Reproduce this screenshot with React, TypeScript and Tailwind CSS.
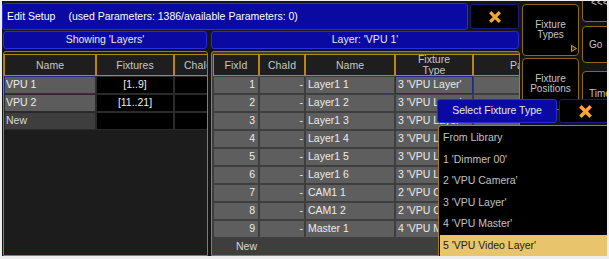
const layers = [
  { id: 1, name: "Layer1 1", type: "3 'VPU Layer'" },
  { id: 2, name: "Layer1 2", type: "3 'VPU Layer'" },
  { id: 3, name: "Layer1 3", type: "3 'VPU Layer'" },
  { id: 4, name: "Layer1 4", type: "3 'VPU Layer'" },
  { id: 5, name: "Layer1 5", type: "3 'VPU Layer'" },
  { id: 6, name: "Layer1 6", type: "3 'VPU Layer'" },
  { id: 7, name: "CAM1 1", type: "2 'VPU Camera'" },
  { id: 8, name: "CAM1 2", type: "2 'VPU Camera'" },
  { id: 9, name: "Master 1", type: "4 'VPU Master'" },
];

const types = ["From Library", "1 'Dimmer 00'", "2 'VPU Camera'", "3 'VPU Layer'", "4 'VPU Master'", "5 'VPU Video Layer'"];

function CloseX({ size }: { size: number }) {
  return (
    <svg width={size} height={size} viewBox="0 0 16 16">
      <path d="M2.5 2.5 L13.5 13.5 M13.5 2.5 L2.5 13.5" stroke="#f3a630" strokeWidth="3.8" />
    </svg>
  );
}

function Head({ w, className = "justify-center", children }: { w: string; className?: string; children: React.ReactNode }) {
  return (
    <div className={`${w} ${className} h-[22px] shrink-0 border border-[#b8880e] bg-[#1e1e1e] text-[#c8c8c8] flex items-center text-center leading-[11px] whitespace-nowrap overflow-hidden`}>
      {children}
    </div>
  );
}

export default function App() {
  return (
    <div className="w-[609px] h-[259px] bg-[#eeeeee] pt-[1px] pl-[2px] pr-[2px] pb-[3px] font-['Liberation_Sans',Arial,sans-serif] text-[10.5px]">
      <div className="relative w-full h-full bg-[#151515] overflow-hidden flex">
        {/* main area */}
        <div className="w-[518px] shrink-0 flex flex-col">
          <div className="h-[29px] pt-[2px] flex gap-[2px]">
            <div className="w-[466px] h-[27px] bg-[#0a0aa2] border border-[#2b2be0] rounded-[3px] flex items-center pl-[4px] text-white">
              <span>Edit Setup</span>
              <span className="ml-[13px]">(used Parameters: 1386/available Parameters: 0)</span>
            </div>
            <div className="w-[49px] h-[25px] mt-[1px] bg-black border border-[#1a1a80] rounded-[3px] flex items-center justify-center">
              <CloseX size={14} />
            </div>
          </div>
          <div className="h-[20px] mt-[1px] flex">
            <div className="ml-[1px] w-[204px] bg-[#0a0aa2] border border-[#2b2be0] rounded-[3px] flex items-center justify-center text-[#e8e8e8]">
              Showing 'Layers'
            </div>
            <div className="ml-[4px] w-[308px] bg-[#0a0aa2] border border-[#2b2be0] rounded-[3px] flex items-center justify-center text-[#e8e8e8]">
              Layer: 'VPU 1'
            </div>
          </div>
          <div className="flex-1 mt-[2px] flex">
            {/* left panel */}
            <div className="ml-[1px] w-[205px] border border-[#a87c10] rounded-t-[3px] bg-[#1c1c1c] pt-[2px] overflow-hidden">
              <div className="flex">
                <Head w="w-[92px]">Name</Head>
                <Head w="w-[78px]">Fixtures</Head>
                <Head w="w-[40px]" className="justify-start pl-[9px]">ChaId</Head>
              </div>
              {[
                { n: "VPU 1", f: "[1..9]", sel: true },
                { n: "VPU 2", f: "[11..21]", sel: false },
              ].map((r) => (
                <div key={r.n} className="flex h-[18px]">
                  <div className={`w-[92px] shrink-0 border ${r.sel ? "border-[#1c2a8a]" : "border-[#2a2a2a]"} bg-[#5c5c5c] text-[#ececec] flex items-center pl-[1px]`}>
                    {r.n}
                  </div>
                  <div className="w-[78px] shrink-0 border border-[#2a2a2a] bg-black text-[#ececec] flex items-center justify-center">
                    {r.f}
                  </div>
                  <div className="w-[40px] shrink-0 border border-[#2a2a2a] bg-black" />
                </div>
              ))}
              <div className="flex h-[18px]">
                <div className="w-[92px] shrink-0 border border-[#2a2a2a] bg-[#3e3e3e] text-[#d8d8d8] flex items-center pl-[1px]">New</div>
                <div className="w-[78px] shrink-0 border border-[#2a2a2a] bg-black" />
                <div className="w-[40px] shrink-0 border border-[#2a2a2a] bg-black" />
              </div>
            </div>
            {/* right panel */}
            <div className="ml-[3px] w-[309px] border border-[#a87c10] rounded-t-[3px] bg-[#3e3e3e] pt-[2px] pl-[1px] overflow-hidden">
              <div className="flex bg-[#1c1c1c]">
                <Head w="w-[46px]">FixId</Head>
                <Head w="w-[46px]">ChaId</Head>
                <Head w="w-[90px]">Name</Head>
                <Head w="w-[78px]">
                  Fixture
                  <br />
                  Type
                </Head>
                <Head w="w-[60px]" className="justify-start pl-[36px]">
                  Patch
                </Head>
              </div>
              {layers.map((l) => (
                <div key={l.id} className="flex h-[18px] text-[#ececec]">
                  <div className="w-[46px] shrink-0 border border-[#3e3e3e] bg-[#5e5e5e] flex items-center justify-end pr-[3px]">{l.id}</div>
                  <div className="w-[46px] shrink-0 border border-[#3e3e3e] bg-[#5e5e5e] flex items-center justify-end pr-[1px]">-</div>
                  <div className="w-[90px] shrink-0 border border-[#3e3e3e] bg-[#5e5e5e] flex items-center pl-[2px]">{l.name}</div>
                  <div className={`w-[78px] shrink-0 border ${l.id === 1 ? "border-[#1c2a8a]" : "border-[#3e3e3e]"} bg-[#5e5e5e] flex items-center pl-[2px] whitespace-nowrap overflow-hidden`}>
                    {l.type}
                  </div>
                  <div className="w-[60px] shrink-0 border border-[#3e3e3e] bg-[#606060]" />
                </div>
              ))}
              <div className="flex h-[17px] text-[#d8d8d8]">
                <div className="w-[46px] flex items-center justify-end pr-[2px]">New</div>
              </div>
            </div>
          </div>
        </div>

        {/* right side buttons */}
        <div className="flex-1 flex text-[#c4c4c4] text-[10px]">
          <div className="ml-[2px] w-[57px] shrink-0 flex flex-col">
            <div className="relative mt-[3px] h-[52px] bg-black border border-[#8c6a16] rounded-[4px] flex items-center justify-center text-center leading-[10px]">
              Fixture
              <br />
              Types
              <svg className="absolute right-[1px] bottom-[3px]" width="6" height="7" viewBox="0 0 6 7">
                <path d="M0.5 0.5 L5.5 3.5 L0.5 6.5 Z" fill="#3a2a00" stroke="#d8a020" strokeWidth="1" />
              </svg>
            </div>
            <div className="mt-[2px] h-[52px] bg-black border border-[#8c6a16] rounded-[4px] flex items-center justify-center text-center leading-[10px]">
              Fixture
              <br />
              Positions
            </div>
          </div>
          <div className="ml-[3px] w-[40px] shrink-0 flex flex-col">
            <div className="-mt-[6px] h-[27px] bg-black border border-[#8c6a16] rounded-[4px] pt-[2px] pl-[8px] leading-[10px]">&lt;&lt;&lt;</div>
            <div className="mt-[4px] h-[37px] bg-black border border-[#8c6a16] rounded-[4px] flex items-center pl-[6px]">Go</div>
            <div className="mt-[8px] h-[45px] bg-black border border-[#8c6a16] rounded-[4px] flex items-center pl-[6px]">Time</div>
          </div>
        </div>

        {/* select fixture type popup */}
        <div className="absolute left-[435px] top-[98px] w-[175px] flex flex-col">
          <div className="flex h-[24px]">
            <div className="w-[120px] bg-[#0a0aa2] border border-[#2b2be0] rounded-[3px] flex items-center justify-center text-[#e8e8e8]">
              Select Fixture Type
            </div>
            <div className="ml-[2px] w-[52px] bg-black border border-[#1a1a80] rounded-[3px] flex items-center justify-center">
              <CloseX size={15} />
            </div>
          </div>
          <div className="mt-[2px] ml-[1px] h-[131px] bg-black border-l border-t border-[#a87c10] rounded-tl-[3px] pt-[1.5px] px-[1px]">
            {types.map((t, i) => (
              <div
                key={t}
                className={`h-[21.5px] flex items-center pl-[3px] ${i === types.length - 1 ? "bg-[#e8c46c] text-[#1e1e1e] mr-[2px]" : "text-[#c2c2c2]"}`}
              >
                {t}
              </div>
            ))}
          </div>
        </div>
      </div>
    </div>
  );
}
